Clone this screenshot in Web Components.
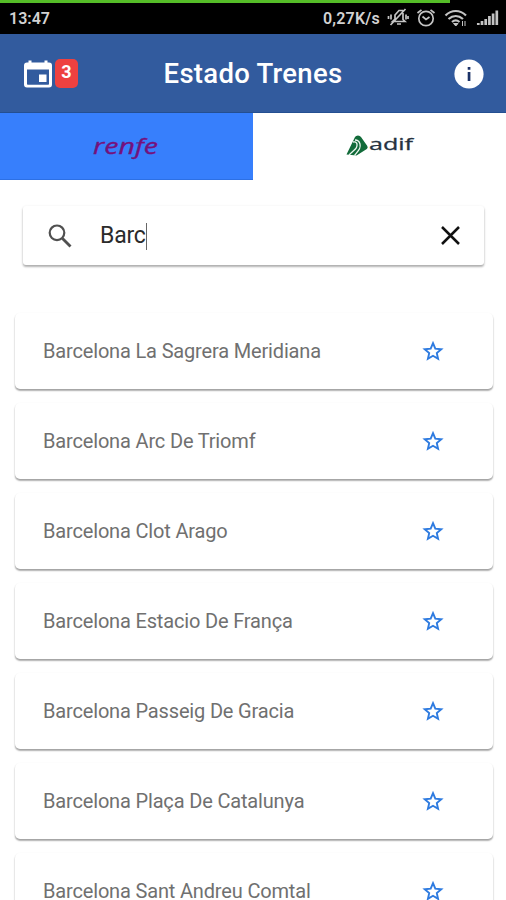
<!DOCTYPE html>
<html lang="es">
<head>
<meta charset="utf-8">
<title>Estado Trenes</title>
<style>
html, body { margin: 0; height: 900px; overflow: hidden; background: #fff; font-family: Roboto, "Liberation Sans", sans-serif; }
</style>
</head>
<body>
<trenes-app></trenes-app>
<script>
const define = (name, html, init) => customElements.define(name, class extends HTMLElement {
  constructor() {
    super();
    this.attachShadow({ mode: 'open' }).innerHTML = html;
  }
  connectedCallback() { if (init) init(this); }
});

define('status-bar', `
<style>
:host { display: flex; box-sizing: border-box; height: 34px; background: linear-gradient(#55bd28,#55bd28) 0 0/450px 3px no-repeat #000; color: #d2d2d2; padding: 3px 7px 0 9px; align-items: center; font-size: 16px; font-weight: 600; line-height: 30px; }
.time { flex: 1; }
.rate { margin-right: 7px; letter-spacing: .2px; }
svg { display: block; fill: none; stroke: #c4c4c4; }
</style>
<span class="time">13:47</span><span class="rate">0,27K/s</span>
<svg width="22" height="20" viewBox="0 0 22 20" stroke-width="1.700" style="margin-top:-3px"><path d="M5.500 14.500L8 12V8l4-4.500h3.500l.5 3v6l2 2zM3.500 18L18.500 2M1.500 9v3M4 7.500v5M19 7.500v5M21 9v3M10 17h4"/></svg>
<svg width="20" height="20" viewBox="0 0 20 20" stroke-width="1.700" style="margin-left:7px;margin-top:-2px"><circle cx="10" cy="10.500" r="7.200"/><path d="M1.500 5L5.500 1.800M18.500 5L14.500 1.800M6.500 8.500L10 11.500l3.500-2.500"/></svg>
<svg width="24" height="20" viewBox="0 0 24 20" stroke-width="2.200" style="margin-left:8px;margin-top:-2px"><path d="M1.500 7.500C7.500 1.500 16 1.500 22 7.500M4.500 11c4.500-4 10-4 14.500 0M8 14c2.500-2.100 5-2.100 7.500 0"/><path d="M9.500 15.500L11.800 18l2.200-2.500z" fill="#c4c4c4" stroke-width="1"/><path d="M18.500 13v5M21 13v5" stroke-width="1"/></svg>
<svg width="23" height="20" viewBox="0 0 23 20" stroke-width="2.700" style="margin-left:8px;margin-top:-3px"><path d="M2.300 18v-2M6 18v-4M9.700 18v-6M13.400 18V9M17.100 18V6.500M20.800 18V3.500"/></svg>`);

define('notification-badge', `
<style>
:host { display: flex; justify-content: center; box-sizing: border-box; width: 23px; height: 29px; border-radius: 5px; background: #ee4140; color: #fff; font-size: 18px; line-height: 26px; font-weight: 700; }
</style><slot></slot>`);

define('app-header', `
<style>
:host { display: grid; grid-template-columns: 100px 1fr 100px; align-items: center; box-sizing: border-box; height: 79px; background: #325b9e; border-bottom: 1px solid #244f91; color: #fff; }
.left { display: flex; align-items: center; padding-left: 22px; gap: 1px; }
h1 { margin: 1px 0 0; font-size: 27.500px; font-weight: 500; letter-spacing: .28px; text-align: center; line-height: 36px; white-space: nowrap; }
.right { display: flex; justify-content: flex-end; padding-right: 22px; }
svg { display: block; }
.right svg { margin-top: 1px; }
.cal { margin-top: 1px; }
</style>
<div class="left">
<svg class="cal" width="32" height="32" viewBox="0 0 32 32"><path fill="#fff" fill-rule="evenodd" d="M6.500 2.500h3V4.500h13V2.500h3V4.500h1.500a3 3 0 0 1 3 3v19a3 3 0 0 1-3 3H5a3 3 0 0 1-3-3v-19a3 3 0 0 1 3-3h1.500zM5 11.500v14.500q0 .8.800.800h20.400q.8 0 .8-.8V11.500zM17 16.500h7.500v7.500H17z"/></svg>
<notification-badge><slot name="count"></slot></notification-badge>
</div>
<h1><slot></slot></h1>
<div class="right"><svg width="30" height="30" viewBox="0 0 30 30"><circle cx="15" cy="15" r="14.600" fill="#fff"/><path fill="#1c3268" d="M13.700 8h2.700v2.700h-2.700zM13.700 13h2.700v9h-2.700z"/></svg></div>`);

define('renfe-logo', `
<style>:host { display: block; } svg { display: block; } text { font: italic 500 22.500px "Open Sans", "Noto Sans", sans-serif; fill: #74117c; stroke: #74117c; stroke-width: .35px; }</style>
<svg width="80" height="40" viewBox="0 0 80 40"><text x="6" y="27.500" textLength="65" lengthAdjust="spacingAndGlyphs">renfe</text></svg>`);

define('adif-logo', `
<style>:host { display: block; } svg { display: block; } text { font: 500 17px "Open Sans", "Noto Sans", sans-serif; fill: #25313e; stroke: #25313e; stroke-width: .3px; }</style>
<svg width="80" height="40" viewBox="0 0 80 40"><path fill="#126b3a" d="M6.500 28.500L15 11q.8-1.500 3-1.500 2 0 3 1.500l6.300 9q1 1.800-.5 3L16.500 29.500z"/><path fill="none" stroke="#edf6ef" stroke-width="1.300" d="M9 29c6-6 8.500-6.500 8-11-.4-2-2-2.500-4-2M14.500 29.500c4-5 6.500-7 5.500-11.500-.6-2.500-2.500-4-5-4"/><text x="29" y="24" textLength="44" lengthAdjust="spacingAndGlyphs">adif</text></svg>`);

define('operator-tab', `
<style>
:host { display: flex; flex: 1; justify-content: center; box-sizing: border-box; padding-top: 13px; height: 67px; background: #fff; }
:host([selected]) { background: #377ffc; border-bottom: 1px solid #2d70e4; }
</style><slot></slot>`);

define('search-field', `
<style>
:host { display: flex; align-items: center; box-sizing: border-box; height: 59px; margin: 26px 22px 0 23px; padding: 0 21px 0 24px; border-radius: 3px; background: #fff; box-shadow: 0 2px 2px rgba(0,0,0,.24), 0 1px 3px rgba(0,0,0,.14); color: #2b2b2b; font-size: 23px; line-height: 34px; }
svg { display: block; }
.value { margin-left: 27px; display: flex; align-items: center; flex: 1; letter-spacing: -.2px; padding-top: 1px; }
i { width: 1px; height: 27px; background: #666; }
</style>
<svg width="26" height="26" viewBox="0 0 26 26" fill="none" stroke="#505050"><circle cx="10" cy="9.800" r="7.300" stroke-width="2.200"/><path d="M15.500 15.500L23.500 23.500" stroke-width="2.900"/></svg>
<span class="value"><span><slot></slot></span><i></i></span>
<svg width="26" height="26" viewBox="0 0 26 26" fill="none" stroke="#111" stroke-width="2.500"><path d="M5 4l17 17M22 4l-17 17"/></svg>`);

define('station-card', `
<style>
:host { display: flex; align-items: center; flex: none; box-sizing: border-box; height: 76px; padding: 0 48px 0 28px; border-radius: 5px; background: #fff; box-shadow: 0 2px 1.500px rgba(0,0,0,.27), 0 1px 2px rgba(0,0,0,.16); color: #707070; font-size: 20px; letter-spacing: -.165px; line-height: 18px; }
.name { flex: 1; white-space: nowrap; }
svg { display: block; }
</style>
<span class="name"><slot></slot></span>
<svg width="24" height="24" viewBox="0 0 24 24" fill="none" stroke="#2e7be0" stroke-width="1.900"><path d="M12 4.200l2.300 5.500 6 .5-4.500 3.900 1.300 5.800-5.100-3.100-5.100 3.100 1.300-5.800-4.500-3.900 6-.5z"/></svg>`);

define('trenes-app', `
<style>
:host { display: flex; flex-direction: column; height: 900px; overflow: hidden; }
status-bar, app-header, nav, search-field { flex: none; }
nav { display: flex; }
main { display: flex; flex-direction: column; gap: 14px; padding: 48px 13px 0 15px; flex: 1; min-height: 0; overflow: hidden; }
</style>
<status-bar></status-bar>
<app-header><span slot="count">3</span>Estado Trenes</app-header>
<nav><operator-tab selected><renfe-logo></renfe-logo></operator-tab><operator-tab><adif-logo></adif-logo></operator-tab></nav>
<search-field>Barc</search-field>
<main></main>`, el => {
  const main = el.shadowRoot.querySelector('main');
  for (const name of ['Barcelona La Sagrera Meridiana', 'Barcelona Arc De Triomf', 'Barcelona Clot Arago', 'Barcelona Estacio De França', 'Barcelona Passeig De Gracia', 'Barcelona Plaça De Catalunya', 'Barcelona Sant Andreu Comtal']) {
    const card = document.createElement('station-card');
    card.textContent = name;
    main.append(card);
  }
});
</script>
</body>
</html>
